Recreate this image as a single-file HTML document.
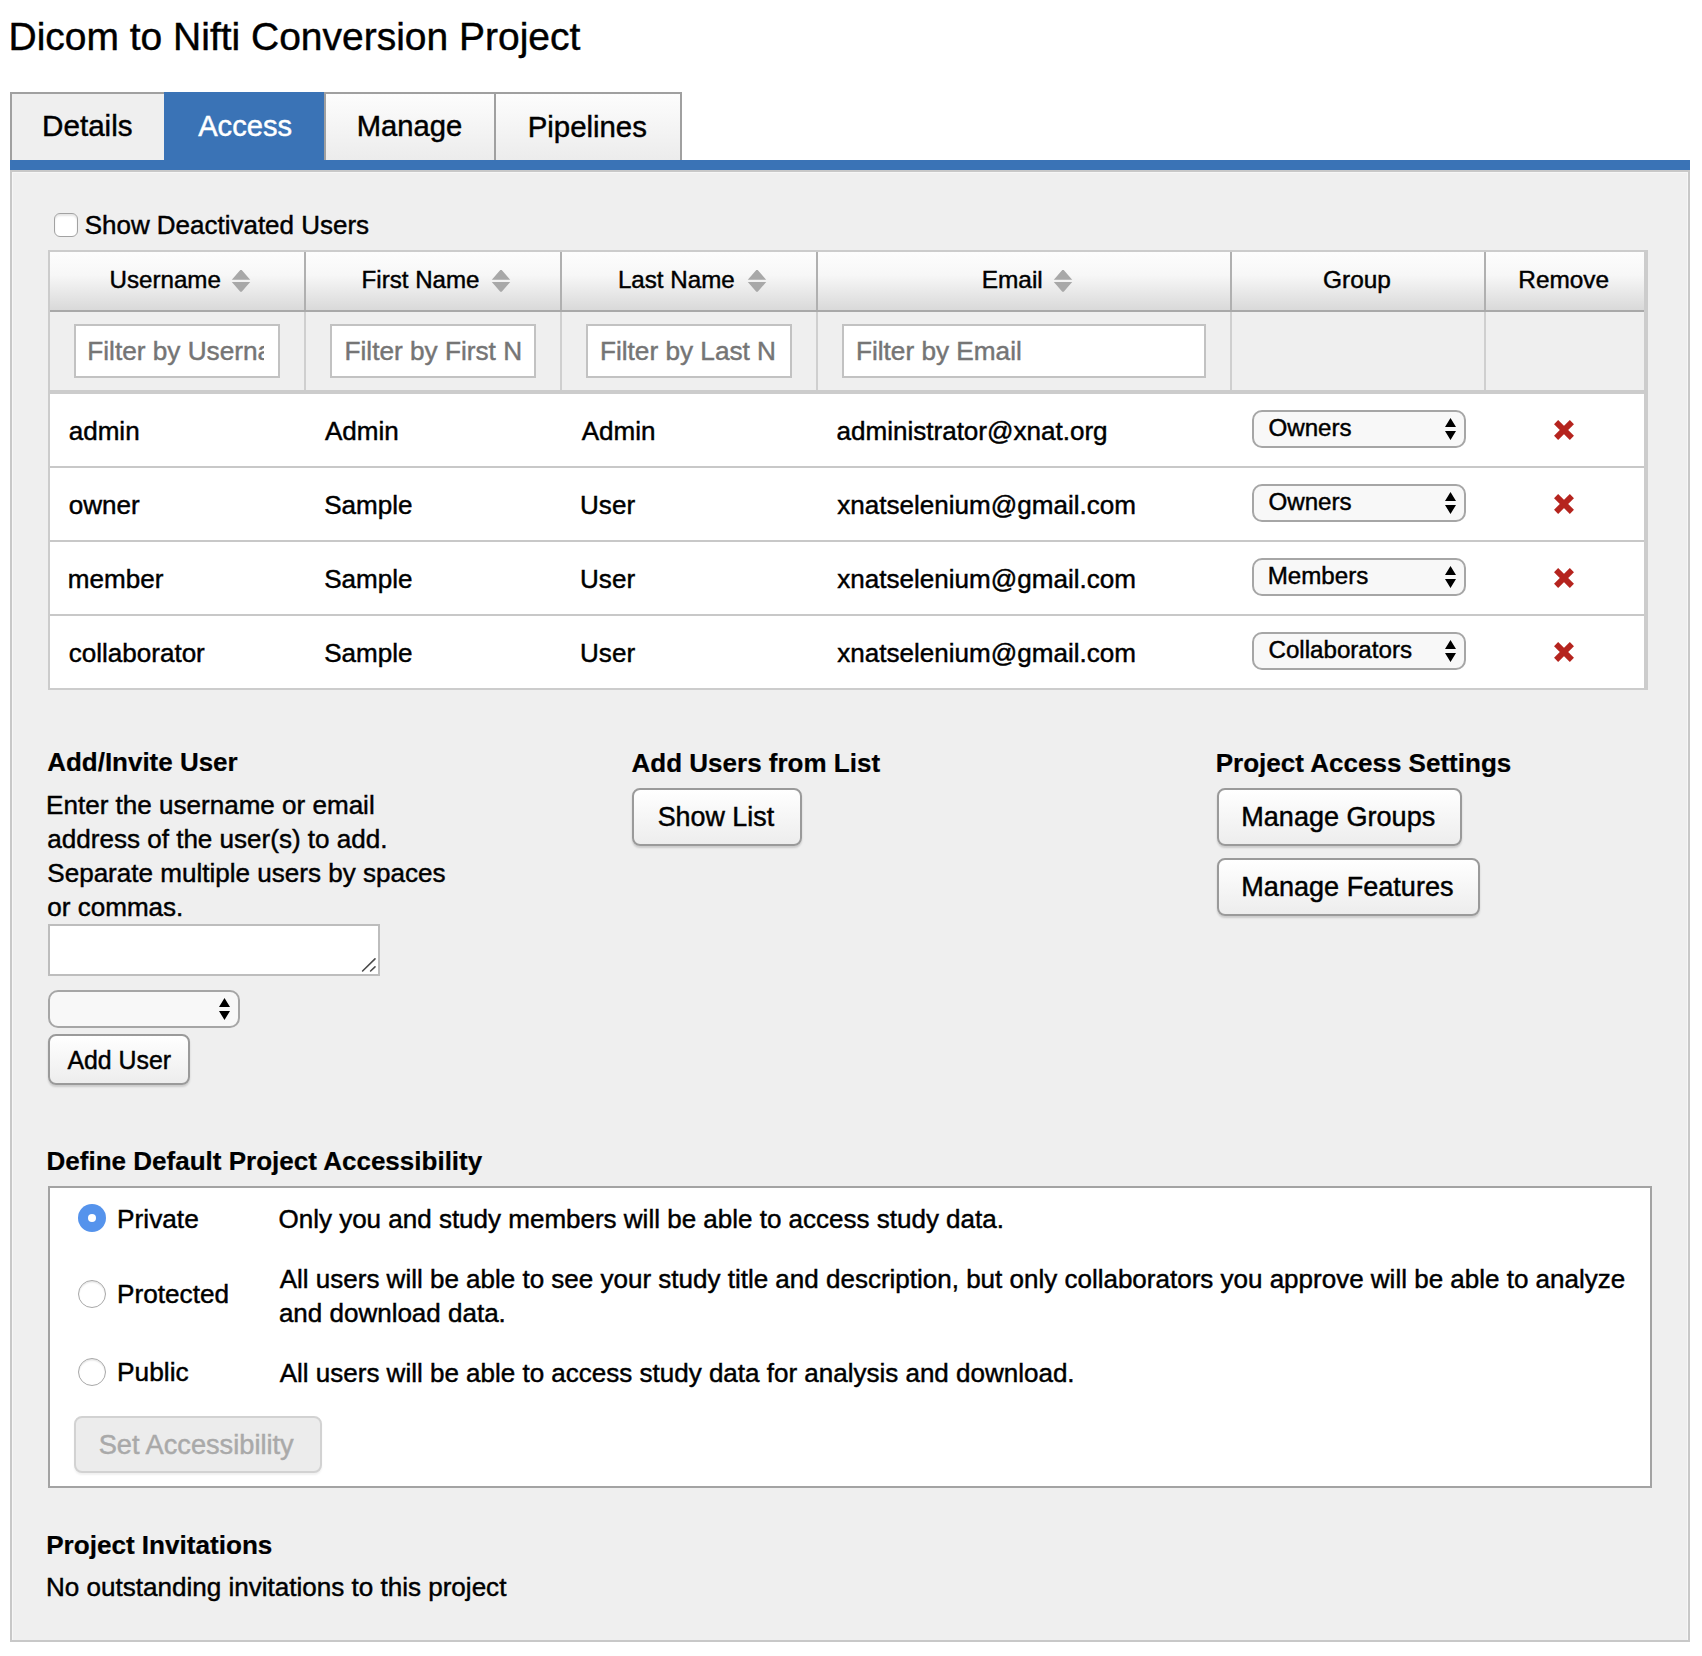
<!DOCTYPE html>
<html><head><meta charset="utf-8"><title>Dicom to Nifti Conversion Project - Access</title>
<style>
html,body{margin:0;padding:0;background:#fff;}
body{width:1702px;height:1656px;position:relative;overflow:hidden;font-family:"Liberation Sans",sans-serif;}
.t{position:absolute;white-space:nowrap;-webkit-text-stroke:0.45px currentColor;}
.b{position:absolute;}
.t[style*="bold"]{-webkit-text-stroke:0.2px currentColor;}
</style></head><body>
<div class="t" style="left:8.55px;top:12.99px;font-size:38.98px;line-height:47px;color:#000;">Dicom to Nifti Conversion Project</div>
<div class="b" style="left:10px;top:92px;width:154px;height:68px;background:#efefef;border:2px solid #a0a0a0;border-right:0;border-bottom:0;box-sizing:border-box;"></div>
<div class="b" style="left:164px;top:92px;width:160px;height:68px;background:#3a73b6;"></div>
<div class="b" style="left:324px;top:92px;width:170px;height:68px;background:linear-gradient(#fdfdfd,#ececec);border:2px solid #a0a0a0;border-bottom:0;border-right:0;box-sizing:border-box;"></div>
<div class="b" style="left:494px;top:92px;width:188px;height:68px;background:linear-gradient(#fdfdfd,#ececec);border:2px solid #a0a0a0;border-bottom:0;box-sizing:border-box;"></div>
<div class="t" style="left:42.09px;top:107.93px;font-size:29.62px;line-height:36px;color:#000;">Details</div>
<div class="t" style="left:198.20px;top:108.60px;font-size:29.14px;line-height:35px;color:#fff;">Access</div>
<div class="t" style="left:356.72px;top:108.58px;font-size:29.18px;line-height:35px;color:#000;">Manage</div>
<div class="t" style="left:527.70px;top:108.51px;font-size:29.38px;line-height:35px;color:#000;">Pipelines</div>
<div class="b" style="left:10px;top:160px;width:1680px;height:10px;background:#3a73b6;"></div>
<div class="b" style="left:10px;top:170px;width:1680px;height:1472px;background:#efefef;border:2px solid #c8c8c8;box-sizing:border-box;box-shadow:inset 1px 1px 0 #f6f6f6, inset -1px 0 0 #f6f6f6;"></div>
<div class="b" style="left:54px;top:213px;width:24px;height:24px;background:#fff;border:1.3px solid #a2a2a2;border-radius:6px;box-sizing:border-box;box-shadow:inset 0 2px 2px rgba(0,0,0,0.10);"></div>
<div class="t" style="left:84.69px;top:209.50px;font-size:25.97px;line-height:31px;color:#000;">Show Deactivated Users</div>
<div class="b" style="left:48px;top:250px;width:1600px;height:440px;background:#efefef;border:2px solid #cccccc;border-right:4px solid #cccccc;box-sizing:border-box;"></div>
<div class="b" style="left:50px;top:252px;width:1594px;height:58px;background:linear-gradient(#fdfdfd 0%,#f7f7f7 40%,#d9d9d9 100%);"></div>
<div class="b" style="left:50px;top:310px;width:1594px;height:2px;background:#a9a9a9;"></div>
<div class="b" style="left:50px;top:312px;width:1594px;height:78px;background:#efefef;"></div>
<div class="b" style="left:50px;top:390px;width:1594px;height:4px;background:#cccccc;"></div>
<div class="b" style="left:304px;top:252px;width:2px;height:58px;background:#b0b0b0;"></div>
<div class="b" style="left:304px;top:312px;width:2px;height:78px;background:#cfcfcf;"></div>
<div class="b" style="left:560px;top:252px;width:2px;height:58px;background:#b0b0b0;"></div>
<div class="b" style="left:560px;top:312px;width:2px;height:78px;background:#cfcfcf;"></div>
<div class="b" style="left:816px;top:252px;width:2px;height:58px;background:#b0b0b0;"></div>
<div class="b" style="left:816px;top:312px;width:2px;height:78px;background:#cfcfcf;"></div>
<div class="b" style="left:1230px;top:252px;width:2px;height:58px;background:#b0b0b0;"></div>
<div class="b" style="left:1230px;top:312px;width:2px;height:78px;background:#cfcfcf;"></div>
<div class="b" style="left:1484px;top:252px;width:2px;height:58px;background:#b0b0b0;"></div>
<div class="b" style="left:1484px;top:312px;width:2px;height:78px;background:#cfcfcf;"></div>
<div class="b" style="left:50px;top:394px;width:1594px;height:72px;background:#fff;"></div>
<div class="b" style="left:50px;top:466px;width:1594px;height:2px;background:#c8c8c8;"></div>
<div class="b" style="left:50px;top:468px;width:1594px;height:72px;background:#fff;"></div>
<div class="b" style="left:50px;top:540px;width:1594px;height:2px;background:#c8c8c8;"></div>
<div class="b" style="left:50px;top:542px;width:1594px;height:72px;background:#fff;"></div>
<div class="b" style="left:50px;top:614px;width:1594px;height:2px;background:#c8c8c8;"></div>
<div class="b" style="left:50px;top:616px;width:1594px;height:72px;background:#fff;"></div>
<div class="b" style="left:50px;top:688px;width:1594px;height:2px;background:#c8c8c8;"></div>
<div class="b" style="left:48px;top:688px;width:1600px;height:2px;background:#cccccc;"></div>
<div class="t" style="left:109.49px;top:265.12px;font-size:24.17px;line-height:29px;color:#000;">Username</div>
<svg class="b" style="left:231px;top:270px" width="20" height="22" viewBox="0 0 20 22"><path d="M9.3 0 L10.7 0 L19.2 9.8 L0.8 9.8 Z M9.3 21.8 L10.7 21.8 L19.2 12.1 L0.8 12.1 Z" fill="#a8a8a8"/></svg>
<div class="t" style="left:361.62px;top:265.14px;font-size:24.11px;line-height:29px;color:#000;">First Name</div>
<svg class="b" style="left:491px;top:270px" width="20" height="22" viewBox="0 0 20 22"><path d="M9.3 0 L10.7 0 L19.2 9.8 L0.8 9.8 Z M9.3 21.8 L10.7 21.8 L19.2 12.1 L0.8 12.1 Z" fill="#a8a8a8"/></svg>
<div class="t" style="left:617.91px;top:265.12px;font-size:24.17px;line-height:29px;color:#000;">Last Name</div>
<svg class="b" style="left:747px;top:270px" width="20" height="22" viewBox="0 0 20 22"><path d="M9.3 0 L10.7 0 L19.2 9.8 L0.8 9.8 Z M9.3 21.8 L10.7 21.8 L19.2 12.1 L0.8 12.1 Z" fill="#a8a8a8"/></svg>
<div class="t" style="left:981.69px;top:265.03px;font-size:24.44px;line-height:29px;color:#000;">Email</div>
<svg class="b" style="left:1053px;top:270px" width="20" height="22" viewBox="0 0 20 22"><path d="M9.3 0 L10.7 0 L19.2 9.8 L0.8 9.8 Z M9.3 21.8 L10.7 21.8 L19.2 12.1 L0.8 12.1 Z" fill="#a8a8a8"/></svg>
<div class="t" style="left:1323.05px;top:265.03px;font-size:24.44px;line-height:29px;color:#000;">Group</div>
<div class="t" style="left:1518.30px;top:265.05px;font-size:24.36px;line-height:29px;color:#000;">Remove</div>
<div class="b" style="left:74px;top:324px;width:206px;height:54px;background:#fff;border:2px solid #c2c2c2;box-sizing:border-box;"></div>
<div class="b" style="left:330px;top:324px;width:206px;height:54px;background:#fff;border:2px solid #c2c2c2;box-sizing:border-box;"></div>
<div class="b" style="left:586px;top:324px;width:206px;height:54px;background:#fff;border:2px solid #c2c2c2;box-sizing:border-box;"></div>
<div class="b" style="left:842px;top:324px;width:364px;height:54px;background:#fff;border:2px solid #c2c2c2;box-sizing:border-box;"></div>
<div class="b" style="left:76px;top:326px;width:188px;height:50px;overflow:hidden">
<div class="t" style="left:11.25px;top:10.42px;font-size:26.2px;line-height:31px;color:#757575;">Filter by Username</div>
</div>
<div class="t" style="left:344.55px;top:336.42px;font-size:26.2px;line-height:31px;color:#757575;">Filter by First N</div>
<div class="t" style="left:599.95px;top:336.42px;font-size:26.2px;line-height:31px;color:#757575;">Filter by Last N</div>
<div class="t" style="left:855.95px;top:336.42px;font-size:26.2px;line-height:31px;color:#757575;">Filter by Email</div>
<div class="t" style="left:68.69px;top:415.87px;font-size:26.05px;line-height:31px;color:#000;">admin</div>
<div class="t" style="left:325.00px;top:415.87px;font-size:26.05px;line-height:31px;color:#000;">Admin</div>
<div class="t" style="left:581.70px;top:415.87px;font-size:26.05px;line-height:31px;color:#000;">Admin</div>
<div class="t" style="left:836.49px;top:415.87px;font-size:26.05px;line-height:31px;color:#000;">administrator@xnat.org</div>
<div class="b" style="left:1252px;top:410px;width:214px;height:38px;background:#f8f8f8;border:2px solid #a6a6a6;border-radius:10px;box-sizing:border-box;"></div>
<div class="t" style="left:1268.47px;top:413.13px;font-size:24.15px;line-height:29px;color:#000;">Owners</div>
<svg class="b" style="left:1444px;top:418px" width="13" height="23" viewBox="0 0 13 23"><path d="M6.5 0 L12 9 L1 9 Z M6.5 22 L12 13 L1 13 Z" fill="#000"/></svg>
<svg class="b" style="left:1554px;top:419.5px" width="20" height="20" viewBox="0 0 20 20"><path d="M2.1 2.1 L17.9 17.9 M17.9 2.1 L2.1 17.9" stroke="#b5241e" stroke-width="5.8" stroke-linecap="butt"/></svg>
<div class="t" style="left:68.69px;top:489.87px;font-size:26.05px;line-height:31px;color:#000;">owner</div>
<div class="t" style="left:324.19px;top:489.87px;font-size:26.05px;line-height:31px;color:#000;">Sample</div>
<div class="t" style="left:580.07px;top:489.87px;font-size:26.05px;line-height:31px;color:#000;">User</div>
<div class="t" style="left:837.30px;top:489.87px;font-size:26.05px;line-height:31px;color:#000;">xnatselenium@gmail.com</div>
<div class="b" style="left:1252px;top:484px;width:214px;height:38px;background:#f8f8f8;border:2px solid #a6a6a6;border-radius:10px;box-sizing:border-box;"></div>
<div class="t" style="left:1268.47px;top:487.13px;font-size:24.15px;line-height:29px;color:#000;">Owners</div>
<svg class="b" style="left:1444px;top:492px" width="13" height="23" viewBox="0 0 13 23"><path d="M6.5 0 L12 9 L1 9 Z M6.5 22 L12 13 L1 13 Z" fill="#000"/></svg>
<svg class="b" style="left:1554px;top:493.5px" width="20" height="20" viewBox="0 0 20 20"><path d="M2.1 2.1 L17.9 17.9 M17.9 2.1 L2.1 17.9" stroke="#b5241e" stroke-width="5.8" stroke-linecap="butt"/></svg>
<div class="t" style="left:67.87px;top:563.87px;font-size:26.05px;line-height:31px;color:#000;">member</div>
<div class="t" style="left:324.19px;top:563.87px;font-size:26.05px;line-height:31px;color:#000;">Sample</div>
<div class="t" style="left:580.07px;top:563.87px;font-size:26.05px;line-height:31px;color:#000;">User</div>
<div class="t" style="left:837.30px;top:563.87px;font-size:26.05px;line-height:31px;color:#000;">xnatselenium@gmail.com</div>
<div class="b" style="left:1252px;top:558px;width:214px;height:38px;background:#f8f8f8;border:2px solid #a6a6a6;border-radius:10px;box-sizing:border-box;"></div>
<div class="t" style="left:1267.71px;top:561.13px;font-size:24.15px;line-height:29px;color:#000;">Members</div>
<svg class="b" style="left:1444px;top:566px" width="13" height="23" viewBox="0 0 13 23"><path d="M6.5 0 L12 9 L1 9 Z M6.5 22 L12 13 L1 13 Z" fill="#000"/></svg>
<svg class="b" style="left:1554px;top:567.5px" width="20" height="20" viewBox="0 0 20 20"><path d="M2.1 2.1 L17.9 17.9 M17.9 2.1 L2.1 17.9" stroke="#b5241e" stroke-width="5.8" stroke-linecap="butt"/></svg>
<div class="t" style="left:68.69px;top:637.87px;font-size:26.05px;line-height:31px;color:#000;">collaborator</div>
<div class="t" style="left:324.19px;top:637.87px;font-size:26.05px;line-height:31px;color:#000;">Sample</div>
<div class="t" style="left:580.07px;top:637.87px;font-size:26.05px;line-height:31px;color:#000;">User</div>
<div class="t" style="left:837.30px;top:637.87px;font-size:26.05px;line-height:31px;color:#000;">xnatselenium@gmail.com</div>
<div class="b" style="left:1252px;top:632px;width:214px;height:38px;background:#f8f8f8;border:2px solid #a6a6a6;border-radius:10px;box-sizing:border-box;"></div>
<div class="t" style="left:1268.47px;top:635.13px;font-size:24.15px;line-height:29px;color:#000;">Collaborators</div>
<svg class="b" style="left:1444px;top:640px" width="13" height="23" viewBox="0 0 13 23"><path d="M6.5 0 L12 9 L1 9 Z M6.5 22 L12 13 L1 13 Z" fill="#000"/></svg>
<svg class="b" style="left:1554px;top:641.5px" width="20" height="20" viewBox="0 0 20 20"><path d="M2.1 2.1 L17.9 17.9 M17.9 2.1 L2.1 17.9" stroke="#b5241e" stroke-width="5.8" stroke-linecap="butt"/></svg>
<div class="t" style="left:47.19px;top:747.10px;font-size:25.97px;line-height:31px;font-weight:bold;color:#000;">Add/Invite User</div>
<div class="t" style="left:631.59px;top:747.68px;font-size:26.01px;line-height:31px;font-weight:bold;color:#000;">Add Users from List</div>
<div class="t" style="left:1215.67px;top:747.67px;font-size:26.04px;line-height:31px;font-weight:bold;color:#000;">Project Access Settings</div>
<div class="t" style="left:46.06px;top:790.17px;font-size:26.05px;line-height:31px;color:#000;">Enter the username or email</div>
<div class="t" style="left:47.29px;top:824.07px;font-size:26.05px;line-height:31px;color:#000;">address of the user(s) to add.</div>
<div class="t" style="left:47.29px;top:857.97px;font-size:26.05px;line-height:31px;color:#000;">Separate multiple users by spaces</div>
<div class="t" style="left:47.29px;top:891.87px;font-size:26.05px;line-height:31px;color:#000;">or commas.</div>
<div class="b" style="left:48px;top:924px;width:332px;height:52px;background:#fff;border:2px solid #bdbdbd;box-sizing:border-box;"></div>
<svg class="b" style="left:360px;top:956px" width="18" height="18" viewBox="0 0 18 18"><path d="M2.6 15 L15 2.9 M10.6 15 L15 10.9" stroke="#4a4a4a" stroke-width="1.6" stroke-linecap="round"/></svg>
<div class="b" style="left:48px;top:990px;width:192px;height:38px;background:#f8f8f8;border:2px solid #a6a6a6;border-radius:10px;box-sizing:border-box;"></div>
<svg class="b" style="left:218px;top:998px" width="13" height="23" viewBox="0 0 13 23"><path d="M6.5 0 L12 9 L1 9 Z M6.5 22 L12 13 L1 13 Z" fill="#000"/></svg>
<div class="b" style="left:48px;top:1034px;width:142px;height:51px;background:linear-gradient(#ffffff,#ededed);border:2px solid #9a9a9a;border-radius:8px;box-sizing:border-box;box-shadow:0 2px 2px rgba(0,0,0,0.15);"></div>
<div class="t" style="left:67.40px;top:1044.68px;font-size:24.86px;line-height:30px;color:#000;">Add User</div>
<div class="b" style="left:632px;top:788px;width:170px;height:58px;background:linear-gradient(#ffffff,#ededed);border:2px solid #9a9a9a;border-radius:8px;box-sizing:border-box;box-shadow:0 2px 2px rgba(0,0,0,0.15);"></div>
<div class="t" style="left:657.66px;top:800.68px;font-size:26.88px;line-height:32px;color:#000;">Show List</div>
<div class="b" style="left:1217px;top:788px;width:245px;height:58px;background:linear-gradient(#ffffff,#ededed);border:2px solid #9a9a9a;border-radius:8px;box-sizing:border-box;box-shadow:0 2px 2px rgba(0,0,0,0.15);"></div>
<div class="t" style="left:1241.29px;top:800.82px;font-size:27.05px;line-height:32px;color:#000;">Manage Groups</div>
<div class="b" style="left:1217px;top:858px;width:263px;height:58px;background:linear-gradient(#ffffff,#ededed);border:2px solid #9a9a9a;border-radius:8px;box-sizing:border-box;box-shadow:0 2px 2px rgba(0,0,0,0.15);"></div>
<div class="t" style="left:1241.28px;top:870.61px;font-size:27.08px;line-height:32px;color:#000;">Manage Features</div>
<div class="t" style="left:46.57px;top:1145.78px;font-size:26.02px;line-height:31px;font-weight:bold;color:#000;">Define Default Project Accessibility</div>
<div class="b" style="left:48px;top:1186px;width:1604px;height:302px;background:#fff;border:2px solid #a3a3a3;box-sizing:border-box;"></div>
<div class="b" style="left:78px;top:1204px;width:28px;height:28px;border-radius:50%;background:#5593ec;"></div>
<div class="b" style="left:87.7px;top:1213.7px;width:8.6px;height:8.6px;border-radius:50%;background:#fff;"></div>
<div class="b" style="left:78px;top:1280px;width:28px;height:28px;border-radius:50%;background:#fff;border:1.3px solid #a8a8a8;box-sizing:border-box;box-shadow:inset 0 1.5px 1.5px rgba(0,0,0,0.10)"></div>
<div class="b" style="left:78px;top:1358px;width:28px;height:28px;border-radius:50%;background:#fff;border:1.3px solid #a8a8a8;box-sizing:border-box;box-shadow:inset 0 1.5px 1.5px rgba(0,0,0,0.10)"></div>
<div class="t" style="left:117.05px;top:1202.90px;font-size:26.26px;line-height:32px;color:#000;">Private</div>
<div class="t" style="left:117.06px;top:1278.93px;font-size:26.17px;line-height:31px;color:#000;">Protected</div>
<div class="t" style="left:117.04px;top:1356.38px;font-size:26.31px;line-height:32px;color:#000;">Public</div>
<div class="t" style="left:278.48px;top:1203.99px;font-size:26.0px;line-height:31px;color:#000;">Only you and study members will be able to access study data.</div>
<div class="t" style="left:279.70px;top:1264.19px;font-size:26.0px;line-height:31px;color:#000;">All users will be able to see your study title and description, but only collaborators you approve will be able to analyze</div>
<div class="t" style="left:278.89px;top:1297.79px;font-size:26.0px;line-height:31px;color:#000;">and download data.</div>
<div class="t" style="left:279.70px;top:1357.99px;font-size:26.0px;line-height:31px;color:#000;">All users will be able to access study data for analysis and download.</div>
<div class="b" style="left:74px;top:1416px;width:248px;height:57px;background:#ececec;border:2px solid #d2d2d2;border-radius:8px;box-sizing:border-box;box-shadow:0 2px 2px rgba(0,0,0,0.06);"></div>
<div class="t" style="left:98.65px;top:1428.07px;font-size:27.21px;line-height:33px;color:#a9a9a9;">Set Accessibility</div>
<div class="t" style="left:46.17px;top:1529.55px;font-size:26.1px;line-height:31px;font-weight:bold;color:#000;">Project Invitations</div>
<div class="t" style="left:45.96px;top:1571.97px;font-size:26.05px;line-height:31px;color:#000;">No outstanding invitations to this project</div>
</body></html>
